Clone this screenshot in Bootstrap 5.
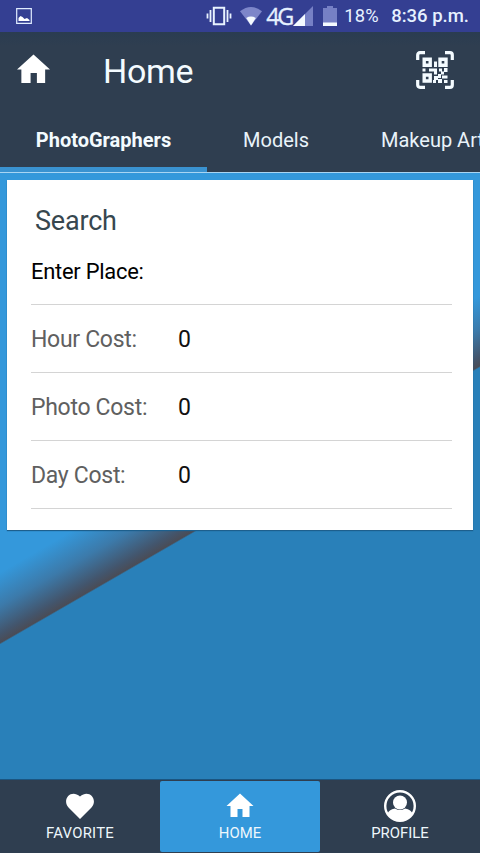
<!DOCTYPE html>
<html lang="en">
<head>
<meta charset="utf-8">
<meta name="viewport" content="width=device-width, initial-scale=1">
<title>Home</title>
<link href="https://cdn.jsdelivr.net/npm/bootstrap@5.3.0/dist/css/bootstrap.min.css" rel="stylesheet">
<style>
body{font-family:Roboto,"Open Sans",sans-serif;background:#2980b9;color:#f4fbff;line-height:1}
svg{display:block;flex:none}
.status{height:32px;background:#343f92;padding:0 11px 0 15px;color:#e6f1ff}
.net{font:23.5px/32px "Open Sans",sans-serif;letter-spacing:-2.4px;width:27px;margin-left:4px;-webkit-text-stroke:.3px #e6f1ff}
.pct{font-size:18.300px;width:47px;margin-left:7px;padding-top:1px;letter-spacing:.2px}
.clock{font-size:18.5px;font-weight:500;padding-top:1px}
.titlebar{height:78px;background:linear-gradient(#2a3c51,#2f3e50 14px);padding:0 26px 0 17px}
.titlebar h1{font-size:34px;margin-left:53px;letter-spacing:-.3px}
.titlebar .house{margin-top:-4px}
.titlebar .scan{margin-top:-2px}
.tabs{height:62px;background:#2f3e50;font-size:20px}
.tabs a{color:#e9f3fa;text-decoration:none;height:62px;padding-top:20px;flex:none}
.tabs .on{width:207px;font-weight:700;color:#f4fbff;border-bottom:5px solid #3a92d0}
.tabs .mid{width:138px}
.tabs .last{padding-left:36px}
.page{border-top:1px solid #a9d5f3;padding:7px 7px 0;background:linear-gradient(150deg,#3498db 346px,#3c7aaa 375px,#43556c 399px,#4a4c56 407px,#2980b9 408.5px)}
.search{height:350px;padding:0 21px 0 24px;color:#000;box-shadow:0 1px 1px #1d5f8d}
.search h2{font-size:27px;color:#37474f;padding:25px 0 0 4px;height:68px;letter-spacing:-.2px}
.line{border-bottom:1px solid #d4d4d4;height:68px;font-size:23px;color:#606060;padding-top:2px}
.line.first{height:57px;font-size:21.9px;color:#000;padding:0 0 8px;letter-spacing:-.25px}
.line label{width:147px;letter-spacing:-.3px}
.line span{color:#111}
.bottom{height:74px;background:#2f3e50;border-top:1px solid #1b5581;font-size:14.9px}
.bottom a{color:#eef7fc;text-decoration:none;height:71px;width:160px;padding-top:8px;margin-top:1px}
.bottom a:first-child{letter-spacing:.25px}
.bottom .on{background:#3498db;border-radius:2px}
.bottom svg{margin-bottom:3px}
</style>
</head>
<body class="vh-100 overflow-hidden d-flex flex-column">
<div class="status d-flex align-items-center flex-shrink-0">
  <svg width="18" height="18" viewBox="0 0 18 18"><path d="M1.7 1.7h14.6v14.6H1.7z" fill="none" stroke="#e0ecff" stroke-width="1.2"/><path d="M3.500 14v-3l2-2 2 1 2 2 2.500-1 2.500 2v1z" fill="#fff"/></svg>
  <svg class="ms-auto" width="26" height="20" viewBox="0 0 26 20"><path d="M7.800 1.800h10.400v16.400H7.800z" fill="none" stroke="#e8f3ff" stroke-width="2"/><path d="M4.500 4v12M1.500 7.500v5M21.500 4v12M24.500 7.500v5" stroke="#e8f3ff" stroke-width="1.800"/></svg>
  <svg class="ms-2" width="22" height="20" viewBox="0 0 23 20"><path d="M0 5Q11.500-4 23 5L11.500 20z" fill="#7d86c9"/><path d="M6.500 12q5-3 10 0l-5 8z" fill="#f4faff"/></svg>
  <span class="net">4G</span>
  <svg width="20" height="20" viewBox="0 0 20 20"><path d="M0 20 20 0v20z" fill="#7680c5"/><path d="M0 20 12 8v12z" fill="#f4faff"/></svg>
  <svg style="margin-left:10px" width="14" height="20" viewBox="0 0 14 20"><path d="M0 2h4V0h6v2h4v18H0z" fill="#7680c5"/><path d="M0 16.500h14V20H0z" fill="#f4faff"/></svg>
  <span class="pct">18%</span><span class="clock">8:36 p.m.</span>
</div>
<header class="titlebar d-flex align-items-center flex-shrink-0">
  <svg class="house" width="33" height="30" viewBox="0 0 34 30"><path d="M17 0 0 15.500h4.500V29.500h9.500V19h6.500v10.500H29V15.500h5z" fill="#fff"/></svg>
  <h1 class="fw-normal mb-0">Home</h1>
  <svg class="ms-auto scan" width="38" height="38" viewBox="0 0 38 38">
    <path d="M1.700 9V4q0-2.300 2.300-2.300H9M29 1.700h5q2.300 0 2.300 2.300v5M36.300 29v5q0 2.300-2.300 2.300h-5M9 36.300H4Q1.700 36.300 1.700 34v-5" fill="none" stroke="#f4fbff" stroke-width="3.200"/>
    <path d="M8.200 8.200h6v6h-6zM24 8.200h6v6h-6zM8.200 24h6v6h-6z" fill="none" stroke="#f4fbff" stroke-width="3.400"/>
    <path d="M18 10.500h3v5.500h-3zM6.500 17.500h3v3h-3zM13 17.500h8v6h-3v-3h-5zM23 17.500h3v3h-3zM28 17h3.500v4H28zM25 20.500h3v3h-3zM18 25h4v-2h3v4h-3v2h-4zM17 29h3v3h-3zM22 28h4v4h-4zM26 24.500h5.500v3H26zM28 29h3.500v3H28z" fill="#f4fbff"/>
  </svg>
</header>
<nav class="tabs d-flex overflow-hidden flex-shrink-0 text-nowrap">
  <a class="on text-center" href="#">PhotoGraphers</a>
  <a class="mid text-center" href="#">Models</a>
  <a class="last" href="#">Makeup Artist</a>
</nav>
<main class="page flex-grow-1">
  <section class="search bg-white">
    <h2 class="fw-normal mb-0">Search</h2>
    <div class="line first d-flex align-items-center">Enter Place:</div>
    <div class="line d-flex align-items-center"><label>Hour Cost:</label><span>0</span></div>
    <div class="line d-flex align-items-center"><label>Photo Cost:</label><span>0</span></div>
    <div class="line d-flex align-items-center"><label>Day Cost:</label><span>0</span></div>
  </section>
</main>
<footer class="bottom d-flex flex-shrink-0">
  <a class="d-flex flex-column align-items-center" href="#"><svg width="34" height="34" viewBox="0 0 34 34"><path d="M17 30 5.500 18.500C-1.500 10.500 8-.5 17 7.500 26-.5 35.500 10.500 28.500 18.500z" fill="#fff"/></svg>FAVORITE</a>
  <a class="on d-flex flex-column align-items-center" href="#"><svg width="34" height="34" viewBox="0 0 34 34"><path d="M17 4.500 3.500 17H7.500V28h7v-8h5v8h7V17h4z" fill="#fff"/></svg>HOME</a>
  <a class="d-flex flex-column align-items-center" href="#"><svg width="34" height="34" viewBox="0 0 34 34"><circle cx="17" cy="17" r="14.800" fill="none" stroke="#fff" stroke-width="2.400"/><circle cx="17" cy="13.500" r="7" fill="#fff"/><path d="M4.500 25q1-4.500 7.500-5.500 5 3 10 0 6.500 1 7.500 5.500Q25 32 17 32T4.500 25z" fill="#fff"/></svg>PROFILE</a>
</footer>
<script src="https://cdn.jsdelivr.net/npm/bootstrap@5.3.0/dist/js/bootstrap.bundle.min.js"></script>
</body>
</html>
